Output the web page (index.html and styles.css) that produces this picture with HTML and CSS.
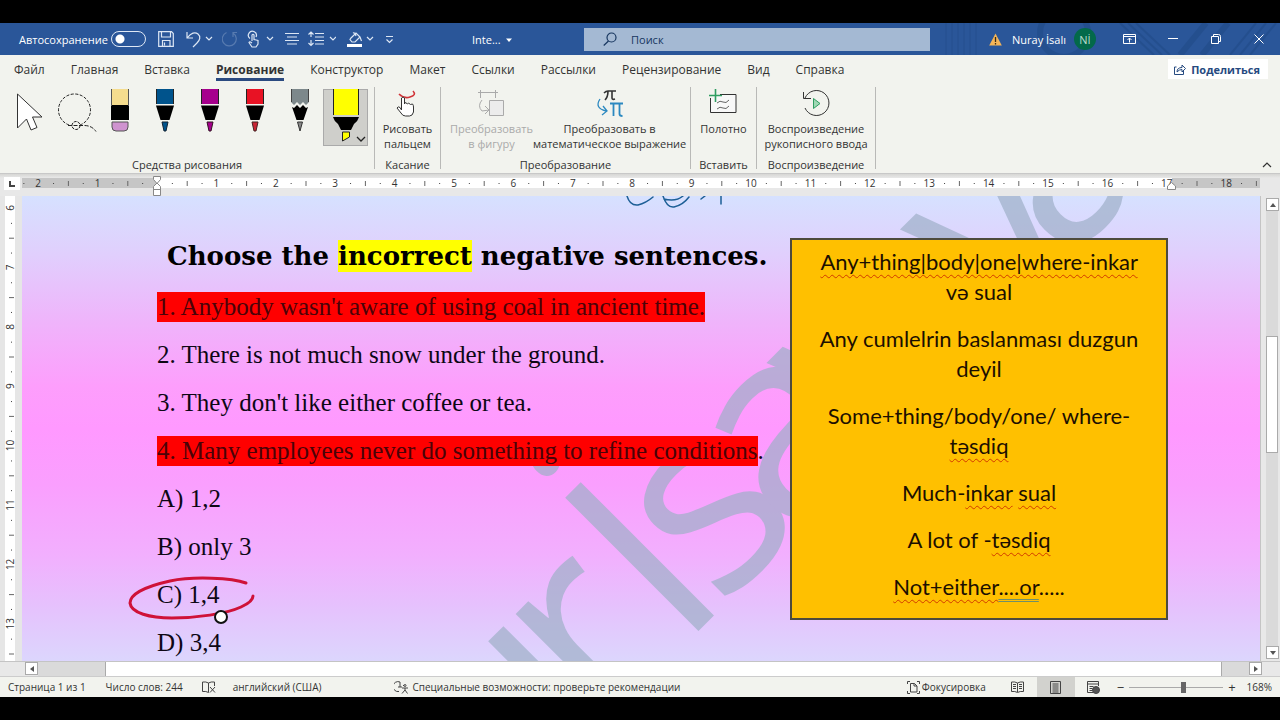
FILE: index.html
```html
<!DOCTYPE html>
<html lang="ru">
<head>
<meta charset="utf-8">
<title>Inte... - Word</title>
<link rel="stylesheet" href="styles.css">
</head>
<body>
<header class="titlebar">
  <svg class="titlebar-art" width="340" height="32" viewBox="0 0 340 32" aria-hidden="true"><g fill="none" stroke="#1d4580" stroke-width="2"><path d="M6 0v32M12 0v32M18 0v32M24 0v32M30 0v32M36 0v32" stroke-width="1"/><circle cx="124" cy="10" r="24" stroke-width="6"/><path d="M180 0l34 32M188 0l34 32M196 0l34 32"/><path d="M262 32l26-32M240 32l26-32" stroke-width="6"/><path d="M290 32l26-32M300 32l26-32M310 32l26-32"/></g></svg>
  <label class="autosave">Автосохранение <input type="checkbox" role="switch"></label>
  <div class="quick">
    <button class="qbtn save" aria-label="Сохранить"><svg width="16" height="16" viewBox="0 0 16 16"><path d="M.7.7h12.8l1.8 1.8v12.8H.7zM3.5 1v5h9V1M4.5 15V9.500h7.500V15M6.500 11.500v3"/></svg></button>
    <button class="qbtn undo" aria-label="Отменить"><svg width="28" height="18" viewBox="0 0 28 18"><path d="M1 2v6h6M1.500 7.500C5 3 9 1.500 12 4c3 2.500 2 6-1 9l-4 4"/><path d="M20 7l3 3 3-3"/></svg></button>
    <button class="qbtn redo" aria-label="Повторить" disabled><svg width="16" height="16" viewBox="0 0 16 16"><path d="M4.500 1.500A7 7 0 1 0 11 2M11 6V1.500h4"/></svg></button>
    <button class="qbtn touch" aria-label="Режим касания"><svg width="27" height="18" viewBox="0 0 27 18"><path d="M3 8.500A4 4 0 1 1 9 7M5 11V5q1-1.500 2 0v4.500l4 1v3.500l-2 3H5L2 12.500q.5-1 1.500-.5L5 13"/><path d="M20 7l3 3 3-3"/></svg></button>
    <button class="qbtn align" aria-label="По центру"><svg width="14" height="14" viewBox="0 0 14 14"><path d="M0 1.500h14M2 5h10M0 8.500h14M2 12h10"/></svg></button>
    <button class="qbtn spacing" aria-label="Интервал"><svg width="28" height="16" viewBox="0 0 28 16"><path d="M3 1v5M3 9v6M.5 3.500L3 1l2.500 2.500M.5 12L3 14.500 5.500 12M7 2.500h9M7 6h9M7 9.500h9M7 13h9M22 6l3 3 3-3"/></svg></button>
    <button class="qbtn fill" aria-label="Заливка"><svg width="27" height="16" viewBox="0 0 27 16"><path d="M4 7l5-5 4 4-5 5H5L3 8.500zM6 2q2-1 3 3M13 6l1.500 4"/><path d="M0 14.500h15" stroke-width="3" stroke="#fff"/><path d="M20 6l3 3 3-3"/></svg></button>
    <button class="qbtn more" aria-label="Настройка панели"><svg width="9" height="9" viewBox="0 0 9 9"><path d="M1 1.500h7M1.500 4.500l3 3 3-3"/></svg></button>
  </div>
  <button class="docname">Inte... <svg width="6" height="4" viewBox="0 0 6 4"><path d="M0 .5h6L3 4z" fill="#fff"/></svg></button>
  <label class="search"><svg width="14" height="14" viewBox="0 0 14 14"><circle cx="8.500" cy="5.500" r="4.500"/><path d="M5.500 9L.7 13.500"/></svg><input type="search" placeholder="Поиск" aria-label="Поиск"></label>
  <div class="account">
    <svg width="13" height="13" viewBox="0 0 13 13"><path d="M6.500.5L12.800 12.500H.2z" fill="#f5b557"/><path d="M6.500 4v5M6.500 10v1.500" stroke="#3b2a14" stroke-width="1.300"/></svg>
    <span>Nuray İsalı</span><span class="avatar">Nİ</span>
  </div>
  <div class="window-buttons">
    <button aria-label="Параметры ленты"><svg width="13" height="10" viewBox="0 0 13 10"><path d="M.5.5h12v9H.5zM.5 2.500h12M6.500 8.500V4M4.500 6l2-2 2 2"/></svg></button>
    <button aria-label="Свернуть"><svg width="10" height="10" viewBox="0 0 10 10"><path d="M0 4.500h10"/></svg></button>
    <button aria-label="Развернуть"><svg width="10" height="10" viewBox="0 0 10 10"><path d="M.5 2.500h7v7h-7zM2.500 2.500v-2h5q2 0 2 2v5h-2"/></svg></button>
    <button aria-label="Закрыть"><svg width="10" height="10" viewBox="0 0 10 10"><path d="M.5.5l9 9M9.500.5l-9 9"/></svg></button>
  </div>
</header>

<nav class="tabs">
  <button>Файл</button><button>Главная</button><button>Вставка</button><button class="active">Рисование</button><button>Конструктор</button><button>Макет</button><button>Ссылки</button><button>Рассылки</button><button>Рецензирование</button><button>Вид</button><button>Справка</button>
  <button class="share"><svg width="12" height="11" viewBox="0 0 12 11"><path d="M2.500 3H.5v7.500h9V7M3 8q0-4.500 5-4.500V1l3.500 3.500L8 8V5.500Q5 5.500 3 8z"/></svg>Поделиться</button>
</nav>

<section class="ribbon">
  <div class="group tools">
    <div class="pens">
      <button aria-label="Выбрать"><svg width="28" height="42" viewBox="0 0 28 42"><path d="M1.500 5v34l9-9 4.500 11 6-2.500-4.500-10.500H26z" fill="#fff" stroke="#333"/></svg></button>
      <button aria-label="Лассо"><svg width="42" height="42" viewBox="0 0 42 42" fill="none" stroke="#222"><path d="M13 35A16 16 0 1 1 24 35" stroke-dasharray="3 1.500"/><circle cx="20" cy="35.500" r="4" stroke-dasharray="3 1"/><path d="M12 35.500h16q8 0 12 6" stroke-dasharray="4 1.500"/></svg></button>
      <button aria-label="Ластик"><svg width="18" height="43" viewBox="0 0 18 43"><path d="M.5 0h17v17H.5z" fill="#f5dc8e"/><path d="M1 33h16v5q0 4-4 4H5q-4 0-4-4z" fill="#cf93cf" stroke="#555"/><path d="M0 16h18v15H0z"/><path d="M.5 0v17M17.500 0v17" stroke="#555"/></svg></button>
      <button aria-label="Синее перо"><svg width="18" height="43" viewBox="0 0 18 43"><path d="M0 0h18v15H0z" fill="#00538c"/><path d="M0 16.500h18L13.500 31h-9z"/><path d="M6 33h6l-2 9H8z" fill="#00538c" stroke="#123"/><path d="M.5 0v15M17.500 0v15" stroke="#222"/></svg></button>
      <button aria-label="Фиолетовое перо"><svg width="18" height="43" viewBox="0 0 18 43"><path d="M0 0h18v15H0z" fill="#a6008d"/><path d="M0 16.500h18L13.500 31h-9z"/><path d="M6 33h6l-2 9H8z" fill="#a6008d" stroke="#312"/><path d="M.5 0v15M17.500 0v15" stroke="#222"/></svg></button>
      <button aria-label="Красное перо"><svg width="18" height="43" viewBox="0 0 18 43"><path d="M0 0h18v15H0z" fill="#e81224"/><path d="M0 16.500h18L13.500 31h-9z"/><path d="M6 33h6l-2 9H8z" fill="#c92434" stroke="#422"/><path d="M.5 0v15M17.500 0v15" stroke="#222"/></svg></button>
      <button aria-label="Карандаш"><svg width="18" height="43" viewBox="0 0 18 43"><path d="M0 0h18v13l-3 3-3-3-3 3-3-3-3 3-3-3z" fill="#7d888b"/><path d="M1 18l2 1 3-3 3 3 3-3 3 3 2-1-4.500 13h-7z"/><path d="M6.500 33h5L9 42z" fill="#888" stroke="#333"/><path d="M.5 0v13M17.500 0v13" stroke="#444"/></svg></button>
      <button class="selected" aria-label="Маркер"><svg width="45" height="57" viewBox="0 0 45 57"><path d="M10 0h26v26H10z" fill="#ff0"/><path d="M10.500 0v26M35.500 0v26" stroke="#222"/><path d="M10 28h26q-1 4-5 7l-3 6H18l-3-6q-4-3-5-7z"/><path d="M19.500 43h7v5l-7 4z" fill="#ff0" stroke="#222"/><path d="M34 48l4 4 4-4" fill="none" stroke="#222" stroke-width="1.300"/></svg></button>
    </div>
    <h2>Средства рисования</h2>
  </div>
  <div class="group touching">
    <button class="cmd"><svg width="28" height="28" viewBox="0 0 28 28" fill="none"><path d="M5 5q5 5 11 3 7-2 3-6" stroke="#d13438" stroke-width="1.600"/><path d="M7.500 21V9q1.500-2 3 0v6l1-1.500 2 1.500 1-1 2 1.500 2-.5q1 1 1 3v5q-1 4-4 4h-4q-3 0-4.500-3L3 19q1-2 3-.5z" fill="#fff" stroke="#333"/></svg>Рисовать<br>пальцем</button>
    <h2>Касание</h2>
  </div>
  <div class="group convert">
    <div class="cmds">
      <button class="cmd" disabled><svg width="28" height="28" viewBox="0 0 28 28" fill="none" stroke="#aaa"><path d="M1 3.500h20M3.500 1v8M18.500 1v8"/><path d="M12.500 11.500h14v15h-14z" fill="#ececec"/><path d="M5 11q-5 6 0 11l7-1M8 17l4 4-4 4"/></svg>Преобразовать<br>в фигуру</button>
      <button class="cmd"><svg width="28" height="28" viewBox="0 0 28 28" fill="none"><path d="M8 4q2-2 4-2h8M12 2q0 6-3 9M16 2v7q0 2 3 1" stroke="#333" stroke-width="1.600"/><path d="M14 14.500h13M17.500 15v12M23.500 15v10q0 2 3 2" stroke="#2b88c0" stroke-width="1.800"/><path d="M4 10q-6 9 6 12M7 17l4 5-5 4" stroke="#2b88c0" stroke-width="1.300"/></svg>Преобразовать в<br>математическое выражение</button>
    </div>
    <h2>Преобразование</h2>
  </div>
  <div class="group insert">
    <button class="cmd"><svg width="28" height="28" viewBox="0 0 28 28" fill="none" stroke="#333"><path d="M11 5.500h16v18H1.500V9" fill="#f8f8f8"/><path d="M0 6.500h13M6.500 0v13" stroke="#2f9e62" stroke-width="1.600"/><path d="M8 14q3-3 6-1t6-2M8 20q3-3 6-1t6-2" stroke="#666"/></svg>Полотно</button>
    <h2>Вставить</h2>
  </div>
  <div class="group replay">
    <button class="cmd"><svg width="28" height="28" viewBox="0 0 28 28" fill="none" stroke="#333"><path d="M3 9A12.500 12.500 0 1 1 3 19M1.500 3v6.500H9"/><path d="M11.500 9.500l6.500 5-6.500 5z" fill="#9fd8b4" stroke="#2f9e62"/></svg>Воспроизведение<br>рукописного ввода</button>
    <h2>Воспроизведение</h2>
  </div>
  <button class="collapse" aria-label="Свернуть ленту"><svg width="10" height="6" viewBox="0 0 10 6"><path d="M1 5l4-4 4 4" fill="none" stroke="#333" stroke-width="1.200"/></svg></button>
</section>

<div class="ruler-row">
  <span class="tabstop"><svg width="6" height="6" viewBox="0 0 6 6"><path d="M1 0v5h5" fill="none" stroke="#444" stroke-width="2"/></svg></span>
  <svg class="hruler" id="hruler" height="22" aria-hidden="true"></svg>
</div>

<div class="workspace">
  <svg class="vruler" id="vruler" width="22" aria-hidden="true"></svg>
  <main class="page">
    <svg class="watermark" width="1238" height="465" viewBox="22 196 1238 465" aria-hidden="true">
      <g transform="rotate(-45)"><text y="940" x="-226 -92 22 78 176 285 352 474 564">urİsayeva</text></g>
    </svg>
    <article class="text">
      <h1>Choose the <mark>incorrect</mark> negative sentences.</h1>
      <p><mark>1. Anybody wasn't aware of using coal in ancient time.</mark></p>
      <p>2. There is not much snow under the ground.</p>
      <p>3. They don't like either coffee or tea.</p>
      <p><mark>4. Many employees never do something to refine conditions</mark>.</p>
      <p>A) 1,2</p>
      <p>B) only 3</p>
      <p>C) 1,4</p>
      <p>D) 3,4</p>
    </article>
    <aside class="notes">
      <p><u>Any+thing|body|one|where-inkar</u> və sual</p>
      <p>Any cumlelrin baslanması duzgun deyil</p>
      <p>Some+thing/body/one/ where-<br><u>təsdiq</u></p>
      <p>Much-<u>inkar</u> <u>sual</u></p>
      <p>A lot of -<u>təsdiq</u></p>
      <p><u>Not+either</u><u class="grammar">....or</u>.....</p>
    </aside>
    <svg class="ink" width="1238" height="465" viewBox="22 196 1238 465" aria-hidden="true">
      <g fill="none" stroke="#1d5f96" stroke-width="1.500" stroke-linecap="round"><path d="M627 196q3 10 11 9 8-2 15-8M663 196q4 12 11 11 9-2 15-10M664 199q12 3 19-3M701 199l4-3M721 196v8"/></g>
      <path d="M246 583c-14-5-52-7-76-2-27 6-40 14-40 22 1 10 20 15 42 15 24 0 54-4 69-11 9-4 12-8 12-11" fill="none" stroke="#cf1238" stroke-width="3" stroke-linecap="round"/>
      <circle cx="221" cy="617" r="6" fill="#fff" stroke="#111" stroke-width="2"/>
    </svg>
  </main>
  <div class="vscroll">
    <button aria-label="Вверх"><svg width="6" height="4" viewBox="0 0 6 4"><path d="M0 4l3-4 3 4z"/></svg></button>
    <div class="vtrack"><div class="vthumb"></div></div>
    <button aria-label="Вниз"><svg width="6" height="4" viewBox="0 0 6 4"><path d="M0 0l3 4 3-4z"/></svg></button>
  </div>
</div>

<div class="hscroll">
  <button aria-label="Влево"><svg width="4" height="6" viewBox="0 0 4 6"><path d="M4 0L0 3l4 3z"/></svg></button>
  <div class="htrack"><div class="hthumb"></div></div>
  <button aria-label="Вправо"><svg width="4" height="6" viewBox="0 0 4 6"><path d="M0 0l4 3-4 3z"/></svg></button>
</div>

<footer class="status">
  <span>Страница 1 из 1</span>
  <span>Число слов: 244</span>
  <svg width="14" height="12" viewBox="0 0 14 12"><path d="M6.500 2Q4 .5.500 1v9.500q3.500-.5 6 1V2Q9 .5 12.500 1v4M8 6l5 5.500M13 6l-5 5.500"/></svg>
  <span>английский (США)</span>
  <button class="access"><svg width="14" height="13" viewBox="0 0 14 13"><path d="M6 1A5 5 0 1 0 5 10.500M4 6h4M6 1v5M9 4l1 1M8 7h6M11 7v2l-3 3.500M11 9l2.500 3.500"/><circle cx="11" cy="4.500" r="1"/></svg>Специальные возможности: проверьте рекомендации</button>
  <button class="focus"><svg width="13" height="13" viewBox="0 0 13 13"><path d="M3 .5H.5V3M10 .5h2.500V3M.5 10v2.500H3M12.500 10v2.500H10M3.500 2.500h4l2.500 2.500v6H3.500zM7 2.500V5h3"/></svg>Фокусировка</button>
  <button class="view" aria-label="Режим чтения"><svg width="13" height="12" viewBox="0 0 13 12"><path d="M6.500 2Q4 .5.500 1v9.500q3.500-.5 6 1 2.500-1.500 6-1V1q-3.500-.5-6 1v9M2 3.500h3M2 5.500h3M2 7.500h3M8 3.500h3M8 5.500h3M8 7.500h3"/></svg></button>
  <button class="view current" aria-label="Разметка страницы"><svg width="11" height="13" viewBox="0 0 11 13"><path d="M.5.5h10v12H.5zM2.500 3h6M2.500 5h6M2.500 7h6M2.500 9h6M2.500 11h6"/></svg></button>
  <button class="view" aria-label="Веб-документ"><svg width="13" height="13" viewBox="0 0 13 13"><path d="M11.500 5V.5H.5v11H6M.5 3h11M2.500 5.500h4M2.500 7.500h3M2.500 9.500h3"/><circle cx="9" cy="9" r="3.500" fill="#555"/></svg></button>
  <label class="zoom"><span>−</span><input type="range" min="10" max="200" value="120" aria-label="Масштаб"><span>+</span></label>
  <span class="percent">168%</span>
</footer>
<script src="ruler.js"></script>
</body>
</html>
```
FILE: styles.css
```css
* { box-sizing: border-box; }
body {
  margin: 0;
  height: 100vh;
  display: flex;
  flex-direction: column;
  border-top: 23px solid #000;
  border-bottom: 23px solid #000;
  background: #e6e6e6;
  color: #333;
  font-family: "Open Sans", "Noto Sans", sans-serif;
  font-size: 11px;
  overflow: hidden;
}
button, input { font: inherit; color: inherit; }
button { border: 0; padding: 0; background: none; }
svg { flex: none; }

.titlebar {
  position: relative;
  display: flex;
  align-items: center;
  height: 32px;
  padding-left: 19px;
  background: #2a5699;
  color: #fff;
}
.titlebar-art { position: absolute; right: 0; top: 0; opacity: .4; }
.autosave { display: flex; align-items: center; width: 139px; white-space: nowrap; }
.autosave input {
  appearance: none;
  flex: none;
  width: 35px;
  height: 16px;
  margin: 0 12px 0 auto;
  border: 1px solid #dfe8f5;
  border-radius: 8px;
  background: radial-gradient(circle at 8px 7px, #fff 4px, transparent 5px);
}
.quick { display: flex; align-items: center; width: 314px; }
.qbtn { display: flex; }
.qbtn svg { fill: none; stroke: #dce6f4; stroke-width: 1.2; }
.undo { margin-left: 12px; }
.redo { margin-left: 8px; opacity: .25; }
.touch { margin-left: 9px; }
.align { margin-left: 11px; }
.spacing { margin-left: 9px; }
.fill { margin-left: 11px; }
.more { margin-left: 11px; }
.docname { width: 112px; text-align: left; }
.docname svg { margin: 0 0 2px 3px; }
.search {
  flex: 1;
  min-width: 0;
  display: flex;
  align-items: center;
  gap: 14px;
  height: 23px;
  padding-left: 19px;
  background: #a4b9d3;
  color: #17365f;
}
.search svg { fill: none; stroke: #17365f; stroke-width: 1.2; }
.search input { flex: 1; min-width: 0; border: 0; padding: 0; background: none; font-size: 11px; outline: 0; }
.search input::placeholder { color: #17365f; opacity: 1; }
.account { position: relative; display: flex; align-items: center; margin-left: 59px; gap: 10px; width: 119px; white-space: nowrap; }
.avatar {
  display: grid;
  place-items: center;
  width: 22px;
  height: 22px;
  margin-left: -2px;
  border-radius: 50%;
  background: #03694a;
  color: #b9dccb;
}
.window-buttons { position: relative; display: flex; }
.window-buttons button { width: 43px; height: 32px; display: grid; place-items: center; }
.window-buttons svg { fill: none; stroke: #fff; }

.tabs { display: flex; align-items: flex-start; gap: 26px; height: 30px; padding: 0 12px 0 14px; background: #f2f3ee; font-size: 12px; }
.tabs button { height: 25px; padding-top: 3px; white-space: nowrap; line-height: 19px; }
.tabs .active { height: 26px; padding-top: 5px; border-bottom: 3px solid #2b4a80; font-weight: 700; }
.tabs .share {
  display: flex;
  align-items: center;
  gap: 5px;
  margin: 4px 0 0 auto;
  height: 20px;
  padding: 0 8px 0 6px;
  background: #fff;
  color: #264a80;
  font-size: 11px;
  font-weight: 700;
}
.share svg { fill: none; stroke: #264a80; }

.ribbon { display: flex; height: 89px; padding-top: 2px; background: #f2f3ee; border-bottom: 1px solid #c8c8c8; }
.group { display: flex; flex-direction: column; height: 82px; border-right: 1px solid #b9b9b7; align-items: center; }
.group h2 { margin: auto 0 -2px; font-size: 11px; font-weight: 400; line-height: 13px; }
.tools { width: 375px; }
.touching { width: 66px; }
.convert { width: 250px; }
.insert { width: 66px; }
.replay { width: 119px; }
.pens { display: flex; align-items: flex-start; align-self: stretch; padding: 2px 0 0 16px; }
.pens button { display: flex; }
.pens button:nth-child(2) { margin: 0 9px 0 12px; padding-top: 1px; }
.pens button:nth-child(n+3) { margin: 0 23px 0 4px; }
.pens button:nth-child(7) { margin-right: 14px; }
.pens .selected:nth-child(8) { margin: 0; background: #cfcfcb; box-shadow: inset 0 0 0 1px #aaa; }
.cmds { display: flex; justify-content: space-between; align-self: stretch; padding: 0 7px 0 9px; }
.cmd { display: flex; flex-direction: column; align-items: center; font-size: 11px; line-height: 15px; text-align: center; white-space: nowrap; padding-top: 2px; }
.cmd svg { margin-bottom: 4px; }
.cmd:disabled { color: #aaa; }
.collapse { margin: auto 8px 2px auto; }

.ruler-row { display: flex; height: 22px; background: linear-gradient(#d6d6d4, #e8e8e8 4px); }
.tabstop { width: 16px; height: 13px; margin: 3px 2px 0 4px; background: #fff; display: grid; place-items: center; }
.hruler { flex: 1; min-width: 0; width: 100%; }
.hruler text, .vruler text { font-size: 10px; fill: #333; text-anchor: middle; font-family: "Open Sans", sans-serif; }

.workspace { flex: 1; min-height: 0; display: flex; }
.page {
  position: relative;
  flex: 1;
  min-width: 0;
  display: flex;
  overflow: hidden;
  background: linear-gradient(#d6e1ff 0%, #e0d0fd 12%, #efb4fb 27%, #fd9efc 41%, #ff99ff 50%, #fa9ffe 62%, #f2affe 77%, #e6c1fd 88%, #dcd6fd 100%);
}
.watermark, .ink { position: absolute; left: 0; top: 0; }
.watermark text { font: 264px "Open Sans", sans-serif; fill: #9fb0c8; }
.watermark { opacity: .7; }
.ink { pointer-events: none; }
.text { position: relative; flex: 1; min-width: 0; padding: 44px 0 0 135px; color: #0d0714; font: 25px/30px "Liberation Serif", serif; white-space: nowrap; }
.text h1 { margin: 0 0 20px 10px; font: 700 26px/32px "DejaVu Serif", serif; color: #000; }
.text h1 mark { display: inline-block; background: #ff0; color: #000; }
.text p { margin: 0 0 18px; height: 30px; }
.text p mark { display: inline-block; background: #f00; color: #4a0308; }
.notes {
  position: relative;
  flex: none;
  align-self: flex-start;
  width: 378px;
  margin: 42px 92px 0 0;
  padding: 7px 22px 0;
  border: 2px solid #4d4a3c;
  background: #ffc000;
  color: #1c0f00;
  font: 22px/30px Lato, sans-serif;
  text-align: center;
}
.notes p { margin: 0 0 17px; }
.notes p:last-child { margin-bottom: 16px; }
.notes u { text-decoration: underline wavy #d23a00 1px; text-underline-offset: 4px; text-decoration-skip-ink: none; }
.notes .grammar { text-decoration: underline double #6f8f6a 1px; }

.vscroll { display: flex; flex-direction: column; width: 20px; padding: 2px 2px 2px 5px; border-left: 1px solid #c4c4c4; background: #e8e8e8; }
.vscroll button, .hscroll button { display: grid; place-items: center; width: 13px; height: 13px; border: 1px solid #aaa; background: #fff; }
.vscroll svg, .hscroll svg { fill: #555; }
.vtrack { flex: 1; background: #dadada; padding: 125px 0 193px; display: flex; flex-direction: column; }
.vthumb { flex: 1; border: 1px solid #aaa; background: #fff; }
.hscroll { display: flex; height: 15px; padding: 0 18px 0 25px; border-top: 1px solid #c4c4c4; background: #e8e8e8; }
.htrack { flex: 1; display: flex; padding: 0 27px 0 67px; background: #dadada; }
.hthumb { flex: 1; border: 1px solid #aaa; border-width: 0 1px; background: #fff; }

.status { display: flex; align-items: center; height: 21px; padding: 0 8px; border-top: 1px solid #ccc; background: #f2f3ee; font-size: 10px; white-space: nowrap; }
.status svg { fill: none; stroke: #444; }
.status > svg { margin: 0 17px 0 19px; }
.status > span + span { margin-left: 20px; }
.access, .focus { display: flex; align-items: center; gap: 4px; }
.access { margin-left: 73px; }
.focus { margin: 0 13px 0 auto; gap: 2px; }
.view { display: grid; place-items: center; width: 38px; height: 20px; }
.view.current { background: #d2d2ce; }
.zoom { display: flex; align-items: center; gap: 5px; margin-left: 4px; font-size: 13px; }
.zoom input { appearance: none; width: 94px; height: 12px; margin: 0; background: linear-gradient(#aaa, #aaa) 0 6px / 100% 1px no-repeat; }
.zoom input::-webkit-slider-thumb { appearance: none; width: 5px; height: 11px; background: #666; }
.status .percent { margin-left: 11px; }
```
FILE: ruler.js
```js
const NS = 'http://www.w3.org/2000/svg';
const UNIT = 59.4;

function add(parent, name, attrs, text) {
  const el = document.createElementNS(NS, name);
  for (const key in attrs) el.setAttribute(key, attrs[key]);
  if (text !== undefined) el.textContent = text;
  parent.appendChild(el);
}

const h = document.getElementById('hruler');
const origin = 135;
add(h, 'rect', { x: 0, y: 4, width: 1238, height: 10, fill: '#c6c6c6' });
add(h, 'rect', { x: origin, y: 4, width: 1015, height: 10, fill: '#fff' });
for (let q = -9; q <= 74; q++) {
  const x = origin + q * UNIT / 4;
  if (q === 0) continue;
  if (q % 4 === 0) add(h, 'text', { x, y: 13 }, Math.abs(q / 4));
  else if (q % 2 === 0) add(h, 'rect', { x, y: 7, width: 1, height: 5, fill: '#666' });
  else add(h, 'rect', { x, y: 9, width: 1, height: 1, fill: '#444' });
}
add(h, 'path', { d: 'M131.500 2.500h7v3l-3.500 4-3.500-4zM131.500 15v-2.500l3.500-3.500 3.500 3.500v9h-7zM131.500 15.500h7', fill: '#fff', stroke: '#888' });
add(h, 'path', { d: 'M1145.500 15.500v-3.500l4-3.500 4 3.500v3.500z', fill: '#fff', stroke: '#888' });

const v = document.getElementById('vruler');
add(v, 'rect', { x: 5, y: 0, width: 10, height: '100%', fill: '#fff' });
for (let q = 0; q <= 31; q++) {
  const y = 12 + q * UNIT / 4;
  if (q % 4 === 0) add(v, 'text', { transform: `translate(14 ${y}) rotate(-90)` }, 6 + q / 4);
  else if (q % 2 === 0) add(v, 'rect', { x: 9, y, width: 5, height: 1, fill: '#666' });
  else add(v, 'rect', { x: 11, y, width: 1, height: 1, fill: '#444' });
}
```
